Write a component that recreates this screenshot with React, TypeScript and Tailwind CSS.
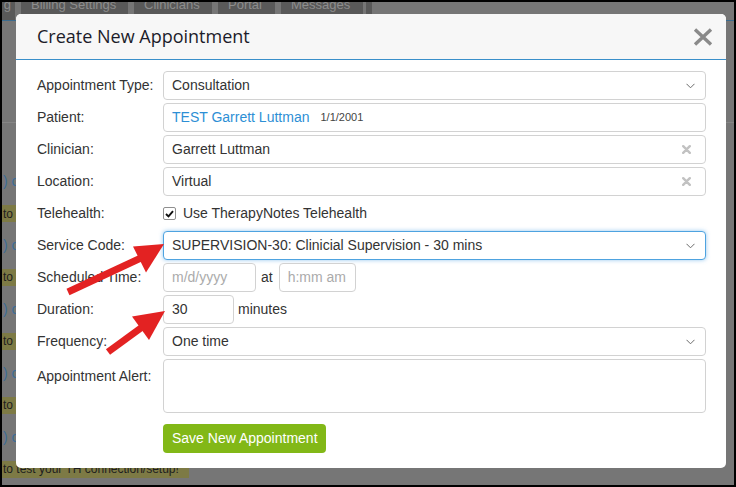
import React from "react"

const Chevron = () => (
	<svg width="9" height="6" viewBox="0 0 9 6" className="shrink-0 mr-[2px]">
		<path d="M0.5 0.8 L4.5 4.8 L8.5 0.8" fill="none" stroke="#6b6b6b" strokeWidth="1" />
	</svg>
)

const Clear = () => (
	<svg width="9" height="9" viewBox="0 0 9 9" className="shrink-0 mr-[6px]">
		<path d="M1.2 1.2 L7.8 7.8 M7.8 1.2 L1.2 7.8" stroke="#c2c2c2" strokeWidth="2.4" strokeLinecap="round" />
	</svg>
)

function Field({ children, focused = false, className = "" }: { children: React.ReactNode, focused?: boolean, className?: string }) {
	return (
		<div
			className={`h-[29px] flex items-center justify-between pl-[8px] pr-[8px] rounded-[4px] border bg-white ${focused ? "border-[#4ea3e0] shadow-[0_0_4px_rgba(102,175,233,0.7)]" : "border-[#d2d2d2]"} ${className}`}
		>
			{children}
		</div>
	)
}

function Row({ label, children, top = false }: { label: string, children: React.ReactNode, top?: boolean }) {
	return (
		<div className={`flex ${top ? "items-start" : "items-center"}`}>
			<div className={`w-[126px] shrink-0 text-[#333] ${top ? "pt-[7px]" : ""}`}>{label}</div>
			<div className="flex-1">{children}</div>
		</div>
	)
}

function BackgroundPage() {
	const tabs = [
		{ label: "Billing Settings", w: "w-[107px]" },
		{ label: "Clinicians", w: "w-[78px]" },
		{ label: "Portal", w: "w-[57px]" },
		{ label: "Messages", w: "w-[82px]" },
	]
	const rows = [0, 1, 2, 3, 4]

	return (
		<div className="flex flex-col h-full">
			<div className="flex h-[18px] text-[13px] text-[#8d8d8d]">
				<div className="w-[13px] bg-[#595959] flex justify-end pr-[4px] leading-[6px] overflow-hidden">g</div>
				<div className="w-[6px]"></div>
				{tabs.map((t, i) => (
					<div key={i} className={`${t.w} bg-[#595959] pl-[10px] leading-[6px] whitespace-nowrap overflow-hidden mr-[6px]`}>
						{t.label}
					</div>
				))}
				<div className="w-[6px] bg-[#595959] -ml-[3px]"></div>
			</div>
			<div className="h-[1px] bg-[#3b6b8e]"></div>
			<div className="h-[101px]"></div>
			<div className="h-[1px] bg-[#858585]"></div>
			<div className="h-[43px]"></div>
			{rows.map((i) => (
				<React.Fragment key={i}>
					<div className="h-[32px] flex items-center pl-[1px] text-[14px] text-[#3b6c96]">) c</div>
					<div className="h-[32px] flex items-center">
						{i < 4 ? (
							<span className="w-[14px] h-[17px] flex items-center bg-[#7d7a45] pl-[1px] text-[12px] text-[#1e1e1e] whitespace-nowrap overflow-hidden">
								to
							</span>
						) : (
							<span className="h-[17px] flex items-center bg-[#7d7a45] pl-[1px] pr-[10px] text-[12px] text-[#1e1e1e] whitespace-nowrap">
								to test your TH connection/setup!
							</span>
						)}
					</div>
				</React.Fragment>
			))}
		</div>
	)
}

function Modal() {
	return (
		<div className="absolute left-[14px] top-[12px] w-[710px] h-[454px] rounded-[5px] bg-white overflow-hidden flex flex-col">
			<div className="h-[46px] shrink-0 bg-[#f7f7f7] border-b border-[#3a8fca] flex items-center justify-between pl-[21px] pr-[13px]">
				<span className="font-['Open_Sans',sans-serif] text-[18px] leading-[24px] text-[#1c1c2a] -mt-[1px]">Create New Appointment</span>
				<svg width="20" height="18" viewBox="0 0 20 18">
					<path d="M2 1.5 L18 16.5 M18 1.5 L2 16.5" stroke="#8a8a8a" strokeWidth="3.4" />
				</svg>
			</div>
			<div className="flex flex-col gap-[3px] pt-[11px] pl-[21px] pr-[20px] text-[14px]">
				<Row label="Appointment Type:">
					<Field>
						<span className="text-[#333]">Consultation</span>
						<Chevron />
					</Field>
				</Row>
				<Row label="Patient:">
					<Field className="justify-start">
						<span className="text-[#2d8fd5]">TEST Garrett Luttman</span>
						<span className="ml-[11px] text-[11px] text-[#444]">1/1/2001</span>
					</Field>
				</Row>
				<Row label="Clinician:">
					<Field>
						<span className="text-[#333]">Garrett Luttman</span>
						<Clear />
					</Field>
				</Row>
				<Row label="Location:">
					<Field>
						<span className="text-[#333]">Virtual</span>
						<Clear />
					</Field>
				</Row>
				<Row label="Telehealth:">
					<div className="h-[29px] flex items-center">
						<div className="w-[13px] h-[13px] rounded-[2px] border border-[#8f8f8f] flex items-center justify-center">
							<svg width="9" height="8" viewBox="0 0 9 8">
								<path d="M1 4 L3.5 6.4 L8 1.2" fill="none" stroke="#111" strokeWidth="1.9" />
							</svg>
						</div>
						<span className="ml-[7px] text-[#333]">Use TherapyNotes Telehealth</span>
					</div>
				</Row>
				<Row label="Service Code:">
					<Field focused>
						<span className="text-[#333]">SUPERVISION-30: Clinicial Supervision - 30 mins</span>
						<Chevron />
					</Field>
				</Row>
				<Row label="Scheduled Time:">
					<div className="flex items-center">
						<Field className="w-[93px]">
							<span className="text-[#ababab]">m/d/yyyy</span>
						</Field>
						<span className="ml-[5px] mr-[6px] text-[#333]">at</span>
						<Field className="w-[77px]">
							<span className="text-[#ababab]">h:mm am</span>
						</Field>
					</div>
				</Row>
				<Row label="Duration:">
					<div className="flex items-center">
						<Field className="w-[71px]">
							<span className="text-[#333]">30</span>
						</Field>
						<span className="ml-[4px] text-[#333]">minutes</span>
					</div>
				</Row>
				<Row label="Frequency:">
					<Field>
						<span className="text-[#333]">One time</span>
						<Chevron />
					</Field>
				</Row>
				<Row label="Appointment Alert:" top>
					<div className="h-[54px] rounded-[4px] border border-[#d2d2d2]"></div>
				</Row>
				<div className="flex pl-[126px] pt-[8px]">
					<button className="h-[29px] w-[163px] rounded-[4px] bg-[#82b817] text-white text-[14px] text-left pl-[9px]">
						Save New Appointment
					</button>
				</div>
			</div>
		</div>
	)
}

export default function App() {
	return (
		<div className="relative w-[736px] h-[487px] bg-black p-[2px] overflow-hidden font-['Liberation_Sans',Arial,sans-serif]">
			<div className="relative w-full h-full bg-[#767676] overflow-hidden">
				<BackgroundPage />
				<Modal />
			</div>
			<svg className="absolute inset-0 pointer-events-none" width="736" height="487" viewBox="0 0 736 487">
				<line x1="68" y1="292" x2="143" y2="257" stroke="#e32222" strokeWidth="7" />
				<polygon points="164,244 133,246.5 146,272.5" fill="#e32222" />
				<line x1="108" y1="352" x2="145" y2="325" stroke="#e32222" strokeWidth="7" />
				<polygon points="165,311 132,316.5 149,340" fill="#e32222" />
			</svg>
		</div>
	)
}
